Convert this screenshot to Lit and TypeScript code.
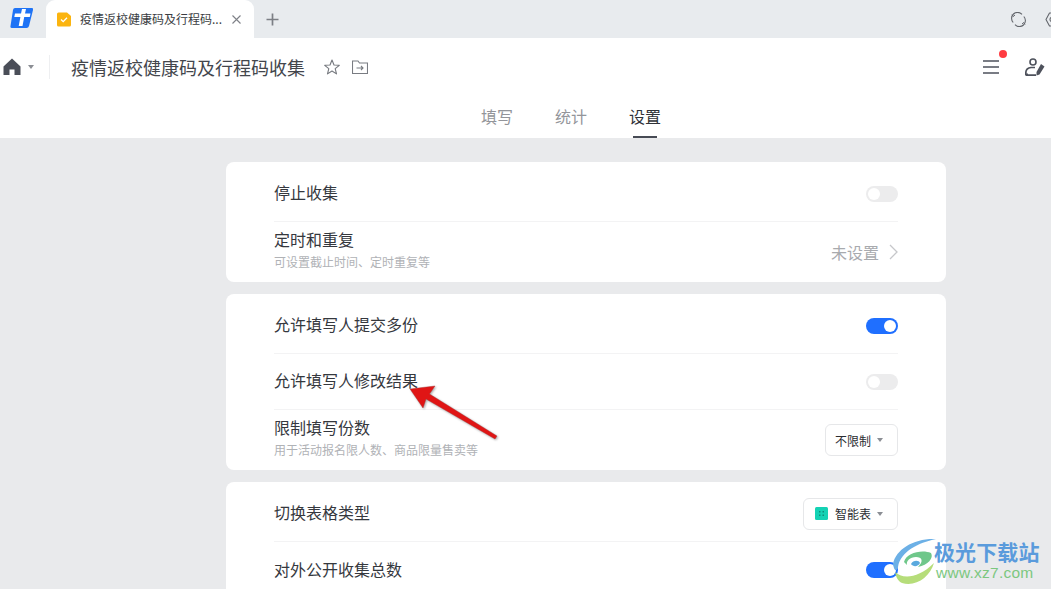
import { LitElement, html, css } from "lit";
import { customElement } from "lit/decorators.js";

@customElement("app-root")
export class AppRoot extends LitElement {
  static styles = css`
    :host { display: block; width: 1051px; height: 589px; overflow: hidden; position: relative; background: #e9eaec;
      font-family: "Noto Sans CJK SC", "Liberation Sans", sans-serif; color: #2f3238; }
    svg { display: block; flex: none; }
    .tabbar { height: 38px; background: #e8ebee; display: flex; align-items: flex-end; }
    .logo { margin: 0 13px 3px 10px; align-self: center; }
    .tab { width: 208px; height: 38px; background: #fff; border-radius: 9px 9px 0 0; display: flex; align-items: center; box-sizing: border-box; padding-left: 11px; font-size: 12px; color: #3a3d42; }
    .tab-title { margin-left: 9px; width: 143px; white-space: nowrap; overflow: hidden; line-height: 38px; }
    .tab-close { margin-left: 9px; }
    .plus { margin: 0 0 12px 12px; align-self: flex-end; }
    .win { margin-left: auto; display: flex; gap: 19px; align-self: center; margin-right: -8px; }
    .head { height: 58px; background: #fff; display: flex; align-items: center; }
    .home { margin-left: 3px; }
    .caret { width: 0; height: 0; border: 3.5px solid transparent; border-top: 4px solid #8b8e94; border-bottom: 0; }
    .head .caret { margin-left: 7px; }
    .vline { width: 1px; height: 24px; background: #eeeff1; margin: 0 21px 0 15px; }
    .title { font-size: 18px; color: #43464c; width: 235px; white-space: nowrap; margin-right: 18px; }
    .folder { margin-left: 12px; }
    .menu-wrap { margin-left: auto; position: relative; }
    .dot { position: absolute; width: 8px; height: 8px; border-radius: 50%; background: #ff3b41; top: -10px; right: -8px; }
    .user { margin: 0 6px 0 26px; }
    .tabs { height: 42px; background: #fff; display: flex; gap: 42px; padding-left: 481px; font-size: 16px; color: #93959a; }
    .tabs div { line-height: 40px; height: 42px; box-sizing: border-box; position: relative; }
    .tabs .on { color: #2f3238; }
    .tabs .on::after { content: ""; position: absolute; left: 4px; right: 4px; bottom: 0; height: 2px; background: #474b55; }
    .main { display: flex; flex-direction: column; gap: 12px; padding: 24px 0 0 226px; }
    .card { width: 720px; box-sizing: border-box; background: #fff; border-radius: 8px; padding: 4px 48px 0; }
    .row { display: flex; align-items: center; justify-content: space-between; height: 56px; border-bottom: 1px solid #f3f3f4; box-sizing: border-box; font-size: 16px; color: #35383e; }
    .row.tall { height: 60px; border-bottom: 0; }
    .row:last-child { border-bottom: 0; }
    .lab { line-height: 24px; margin-top: -3px; }
    .tall .lab { line-height: 22px; margin-top: -5px; }
    .sub { font-size: 12px; line-height: 18px; color: #b0b2b6; margin-top: 3px; }
    .sw { width: 32px; height: 16px; border-radius: 8px; background: #ececed; position: relative; }
    .sw::after { content: ""; position: absolute; top: 2px; left: 2px; width: 12px; height: 12px; border-radius: 50%; background: #fff; }
    .sw.on { background: #1f6fff; }
    .sw.on::after { left: 18px; }
    .val { display: flex; align-items: center; color: #a8aaae; font-size: 16px; gap: 10px; }
    .sel { height: 32px; box-sizing: border-box; border: 1px solid #e6e7e9; border-radius: 6px; display: flex; align-items: center; padding: 0 14px 0 9px; font-size: 12px; color: #2b2d31; gap: 5px; }
    .sel .caret { border-width: 3px; border-top-width: 4px; border-bottom: 0; margin-left: 1px; }
    .sel.smart { padding: 0 14px 0 11px; gap: 7px; }
    .sel.smart .caret { margin-left: -1px; }
    .arrow { position: absolute; left: 405px; top: 382px; }
    .mark { position: absolute; left: 892px; top: 537px; width: 159px; height: 52px; }
    .mark svg { position: absolute; left: 0; top: 0; }
    .m1 { position: absolute; left: 42px; top: 0; font-size: 21px; font-weight: 700; line-height: 28px; color: #5a9bdc; white-space: nowrap; letter-spacing: .1px; }
    .m2 { position: absolute; left: 44px; top: 27px; font-family: "Liberation Sans", sans-serif; font-size: 15.5px; line-height: 18px; color: #7cc77f; white-space: nowrap; letter-spacing: .25px; }
  `;

  private sw(on = false) {
    return html`<div class="sw ${on ? "on" : ""}"></div>`;
  }

  render() {
    return html`
      <div class="tabbar">
        <svg class="logo" width="23" height="22" viewBox="0 0 23 22">
          <path d="M5 1 H22 Q23.5 1 23 3 L19 19 Q18.5 21 16.500 21 H2 Q0 21 .5 19 L3 3 Q3.300 1 5 1Z" fill="#1f73f5"/>
          <path d="M5 6.500 H11 L12 2 H16 L15 6.500 H20.500 L19.800 10 H14.200 L12.500 19 H8.700 L10.400 10 H4.300Z" fill="#fff"/>
        </svg>
        <div class="tab">
          <svg width="14" height="15" viewBox="0 0 14 15">
            <path d="M1.500 .5 H10 L14 4 V13 Q14 14.500 12.500 14.500 H1.500 Q0 14.500 0 13 V2 Q0 .5 1.500 .5Z" fill="#fbb40f"/>
            <path d="M4 7.500 L6.200 9.600 L10 5.800" fill="none" stroke="#fff" stroke-width="1.300"/>
          </svg>
          <div class="tab-title">疫情返校健康码及行程码...</div>
          <svg class="tab-close" width="9" height="9" viewBox="0 0 9 9"><path d="M.5 .5 L8.500 8.500 M8.500 .5 L.5 8.500" stroke="#7e8187" stroke-width="1.100"/></svg>
        </div>
        <svg class="plus" width="13" height="13" viewBox="0 0 13 13"><path d="M6.500 .5 V12.500 M.5 6.500 H12.500" stroke="#7c7f85" stroke-width="1.700"/></svg>
        <div class="win">
          <svg width="15" height="15" viewBox="0 0 15 15" fill="none" stroke="#63666c" stroke-width="1.100">
            <path d="M2.200 10.500 A6 6 0 0 1 11 2.300"/><path d="M12.800 4.500 A6 6 0 0 1 4 12.700"/>
            <path d="M1 2.500 L2.300 4.500 L4 3" stroke-width="1"/><path d="M14 12.500 L12.700 10.500 L11 12" stroke-width="1"/>
          </svg>
          <svg width="14" height="15" viewBox="0 0 14 15" fill="none" stroke="#63666c" stroke-width="1.100">
            <path d="M4.500 1 H9.500 L13 7.500 L9.500 14 H4.500 L1 7.500Z" stroke-linejoin="round"/><circle cx="7" cy="7.500" r="2"/>
          </svg>
        </div>
      </div>
      <div class="head">
        <svg class="home" width="18" height="18" viewBox="0 0 18 18" class="home">
          <path d="M9 .5 L17.500 8.500 V17 H11.500 V11.500 H6.500 V17 H.5 V8.500Z" fill="#4a4e58"/>
        </svg>
        <div class="caret"></div>
        <div class="vline"></div>
        <div class="title">疫情返校健康码及行程码收集</div>
        <svg width="16" height="16" viewBox="0 0 16 16"><path d="M8 1 L10 6 L15.300 6.300 L11.200 9.700 L12.500 14.900 L8 12 L3.500 14.900 L4.800 9.700 L.7 6.300 L6 6Z" fill="none" stroke="#75787e" stroke-width="1.100" stroke-linejoin="round"/></svg>
        <svg class="folder" width="16" height="14" viewBox="0 0 16 14" fill="none" stroke="#797c82" stroke-width="1.100"><path d="M.5 1 H6 L7.500 3 H15.500 V13.500 H.5Z"/><path d="M4.500 8 H11 M9 6 L11 8 L9 10"/></svg>
        <div class="menu-wrap">
          <svg width="16" height="14" viewBox="0 0 16 14"><path d="M0 1 H16 M0 7 H16 M0 13 H16" stroke="#4e525c" stroke-width="1.700"/></svg>
          <div class="dot"></div>
        </div>
        <svg class="user" width="20" height="18" viewBox="0 0 20 18">
          <circle cx="8" cy="4" r="3" fill="none" stroke="#4e525c" stroke-width="1.600"/>
          <path d="M.8 17 V15 Q.8 10 6 9.500 H10 " fill="none" stroke="#4e525c" stroke-width="1.700"/>
          <path d="M.5 15.500 H3 V18 H.5Z M3 16.300 H11 V18 H3Z" fill="#4e525c"/>
          <path d="M16 6 L19.500 8.500 L14.500 16.500 L11.500 17.500 L11.500 14Z" fill="#4e525c"/>
        </svg>
      </div>
      <div class="tabs"><div>填写</div><div>统计</div><div class="on">设置</div></div>
      <div class="main">
        <div class="card">
          <div class="row"><div class="lab">停止收集</div>${this.sw()}</div>
          <div class="row tall">
            <div class="lab">定时和重复<div class="sub">可设置截止时间、定时重复等</div></div>
            <div class="val">未设置<svg width="9" height="16" viewBox="0 0 9 16"><path d="M1 1 L8 8 L1 15" fill="none" stroke="#c6c7ca" stroke-width="1.300"/></svg></div>
          </div>
        </div>
        <div class="card">
          <div class="row"><div class="lab">允许填写人提交多份</div>${this.sw(true)}</div>
          <div class="row"><div class="lab">允许填写人修改结果</div>${this.sw()}</div>
          <div class="row tall">
            <div class="lab">限制填写份数<div class="sub">用于活动报名限人数、商品限量售卖等</div></div>
            <div class="sel">不限制<div class="caret"></div></div>
          </div>
        </div>
        <div class="card">
          <div class="row"><div class="lab">切换表格类型</div>
            <div class="sel smart">
              <svg width="13" height="13" viewBox="0 0 13 13"><rect width="13" height="13" rx="1.500" fill="#14d2b4"/><path d="M4 4 H5.500 V5.500 H4Z M7.500 4 H9 V5.500 H7.500Z M4 7.500 H5.500 V9 H4Z M7.500 7.500 H9 V9 H7.500Z" fill="#0c8f7a"/></svg>
              智能表<div class="caret"></div>
            </div>
          </div>
          <div class="row"><div class="lab">对外公开收集总数</div>${this.sw(true)}</div>
        </div>
      </div>
      <svg class="arrow" width="95" height="60" viewBox="0 0 95 60">
        <path d="M5 7 L30 4 L24.500 12 L92 54 L90 57 L21 17 L18 26Z" fill="#e01515" stroke="#a33" stroke-width=".4" style="filter: drop-shadow(1px 1px 1px rgba(0,0,0,.35))"/>
      </svg>
      <div class="mark">
        <svg width="46" height="50" viewBox="0 0 46 50" fill="none">
          <path d="M1 27 C4 12 22 1 44 2 C26 6 9 14 6 30 C4 36 2 33 1 27Z" fill="#6cb0e6"/>
          <path d="M12 25 C14 16 30 12 39 16 C42 21 36 28 26 30 C32 24 30 20 24 20 C18 20 14 24 15 28Z" fill="#6fc78a"/>
          <path d="M19 27 C21 23 27 23 28 26 C26 30 21 30 19 27Z" fill="#5aa9de"/>
          <path d="M3 35 C10 42 26 42 42 26 C38 40 24 50 10 46 C6 44 4 40 3 35Z" fill="#b6dd7a"/>
        </svg>
        <div class="m1">极光下载站</div>
        <div class="m2">www.xz7.com</div>
      </div>
    `;
  }
}
